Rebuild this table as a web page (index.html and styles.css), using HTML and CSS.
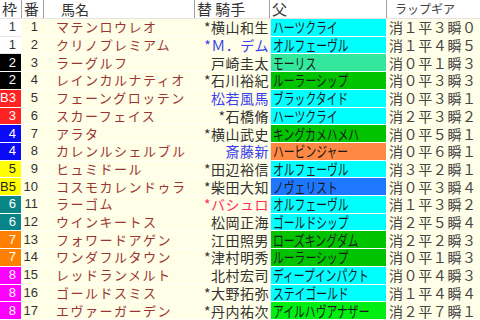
FILE: index.html
```html
<!DOCTYPE html>
<html lang="ja">
<head>
<meta charset="utf-8">
<link rel="stylesheet" href="styles.css">
</head>
<body>
<div class="table">
  <div class="row head">
    <div class="h h-waku">枠</div>
    <div class="h h-num">番</div>
    <div class="h h-name">馬名</div>
    <div class="h h-jockey">替&nbsp;騎手</div>
    <div class="h h-sire">父</div>
    <div class="h h-lap">ラップギア</div>
  </div>
  <div class="body">
    <div class="row"><div class="waku w1">1</div><div class="num">1</div><div class="name">マテンロウレオ</div><div class="jockey">*横山和生</div><div class="sire s-cyan"><span>ハーツクライ</span></div><div class="lap">消１平３瞬０</div></div>
    <div class="row"><div class="waku w1">1</div><div class="num">2</div><div class="name">クリノプレミアム</div><div class="jockey blue">*Ｍ．デム</div><div class="sire s-cyan"><span>オルフェーヴル</span></div><div class="lap">消１平４瞬５</div></div>
    <div class="row"><div class="waku w2">2</div><div class="num">3</div><div class="name">ラーグルフ</div><div class="jockey">戸崎圭太</div><div class="sire s-mint"><span>モーリス</span></div><div class="lap">消０平１瞬３</div></div>
    <div class="row"><div class="waku w2">2</div><div class="num">4</div><div class="name">レインカルナティオ</div><div class="jockey">*石川裕紀</div><div class="sire s-green"><span>ルーラーシップ</span></div><div class="lap">消０平３瞬３</div></div>
    <div class="row"><div class="waku w3">B3</div><div class="num">5</div><div class="name">フェーングロッテン</div><div class="jockey blue">松若風馬</div><div class="sire s-cyan"><span>ブラックタイド</span></div><div class="lap">消０平３瞬１</div></div>
    <div class="row"><div class="waku w3">3</div><div class="num">6</div><div class="name">スカーフェイス</div><div class="jockey">*石橋脩</div><div class="sire s-cyan"><span>ハーツクライ</span></div><div class="lap">消２平３瞬２</div></div>
    <div class="row"><div class="waku w4">4</div><div class="num">7</div><div class="name">アラタ</div><div class="jockey">*横山武史</div><div class="sire s-green"><span>キングカメハメハ</span></div><div class="lap">消０平５瞬１</div></div>
    <div class="row"><div class="waku w4">4</div><div class="num">8</div><div class="name">カレンルシェルブル</div><div class="jockey blue">斎藤新</div><div class="sire s-orange"><span>ハービンジャー</span></div><div class="lap">消０平６瞬１</div></div>
    <div class="row"><div class="waku w5">5</div><div class="num">9</div><div class="name">ヒュミドール</div><div class="jockey">*田辺裕信</div><div class="sire s-cyan"><span>オルフェーヴル</span></div><div class="lap">消３平２瞬１</div></div>
    <div class="row"><div class="waku w5">B5</div><div class="num">10</div><div class="name">コスモカレンドゥラ</div><div class="jockey">*柴田大知</div><div class="sire s-blue"><span>ノヴェリスト</span></div><div class="lap">消０平３瞬４</div></div>
    <div class="row"><div class="waku w6">6</div><div class="num">11</div><div class="name">ラーゴム</div><div class="jockey red">*バシュロ</div><div class="sire s-cyan"><span>オルフェーヴル</span></div><div class="lap">消１平３瞬２</div></div>
    <div class="row"><div class="waku w6">6</div><div class="num">12</div><div class="name">ウインキートス</div><div class="jockey">松岡正海</div><div class="sire s-cyan"><span>ゴールドシップ</span></div><div class="lap">消２平５瞬４</div></div>
    <div class="row"><div class="waku w7">7</div><div class="num">13</div><div class="name">フォワードアゲン</div><div class="jockey">江田照男</div><div class="sire s-green"><span>ローズキングダム</span></div><div class="lap">消２平２瞬３</div></div>
    <div class="row"><div class="waku w7">7</div><div class="num">14</div><div class="name">ワンダフルタウン</div><div class="jockey">*津村明秀</div><div class="sire s-green"><span>ルーラーシップ</span></div><div class="lap">消０平１瞬３</div></div>
    <div class="row"><div class="waku w8">8</div><div class="num">15</div><div class="name">レッドランメルト</div><div class="jockey">北村宏司</div><div class="sire s-cyan"><span>ディープインパクト</span></div><div class="lap">消０平４瞬３</div></div>
    <div class="row"><div class="waku w8">8</div><div class="num">16</div><div class="name">ゴールドスミス</div><div class="jockey">*大野拓弥</div><div class="sire s-cyan"><span>ステイゴールド</span></div><div class="lap">消１平４瞬４</div></div>
    <div class="row"><div class="waku w8">8</div><div class="num">17</div><div class="name">エヴァーガーデン</div><div class="jockey">*丹内祐次</div><div class="sire s-lime"><span>アイルハヴアナザー</span></div><div class="lap">消２平７瞬１</div></div>
  </div>
</div>
</body>
</html>
```

FILE: styles.css
```css
* { box-sizing: border-box; margin: 0; padding: 0; }

html, body {
  width: 480px;
  height: 320px;
  overflow: hidden;
  background: #fffee6;
}

body {
  font-family: "Noto Sans CJK JP", "Liberation Sans", sans-serif;
  color: #333;
}

.table {
  width: 480px;
  height: 320px;
  display: flex;
  flex-direction: column;
  overflow: hidden;
}

.row {
  display: grid;
  grid-template-columns: 22px 22px 151px 75px 117px 93px;
}

.head {
  height: 19px;
  background: #fff;
  border-bottom: 1px solid #e4e4e4;
}

.h {
  display: flex;
  align-items: center;
  font-size: 15px;
  line-height: 18px;
  color: #333;
  border-right: 1px solid #a0a0a0;
  white-space: nowrap;
}

.h-waku { padding-left: 2px; }
.h-num { padding-left: 2px; }
.h-name { padding-left: 17px; font-size: 14px; }
.h-jockey { padding-left: 2px; }
.h-sire { padding-left: 2px; }
.h-lap { border-right: none; padding-left: 8px; font-size: 12px; color: #444; }

.body {
  flex: 1;
  display: flex;
  flex-direction: column;
}

.body .row { flex: 1; }

.body .row > div {
  display: flex;
  align-items: center;
  white-space: nowrap;
  border-bottom: 1px solid #fffff6;
  line-height: 16px;
}

.waku {
  justify-content: flex-end;
  padding-right: 5px;
  font-family: "Liberation Sans", sans-serif;
  font-size: 13px;
  color: #fff;
  border-right: 1px solid #fff;
  border-bottom-color: #fff !important;
}
.w1 { background: #fff; color: #333; border-bottom-color: #e8e8e8 !important; }
.w2 { background: #000; }
.w3 { background: #ff2222; }
.w4 { background: #0a0af5; }
.w5 { background: #ffff00; color: #222; }
.w6 { background: #0a8585; }
.w7 { background: #ff8000; }
.w8 { background: #ff00ff; }

.num {
  justify-content: flex-end;
  padding-right: 6px;
  font-family: "Liberation Sans", sans-serif;
  font-size: 13px;
  color: #333;
}

.name {
  padding-left: 12px;
  font-size: 13px;
  letter-spacing: 1.5px;
  color: #9b3535;
  overflow: hidden;
}

.jockey {
  justify-content: flex-end;
  padding-right: 1px;
  font-size: 14px;
  letter-spacing: 0.5px;
  color: #333;
}
.jockey.blue { color: #3a3ef0; }
.jockey.red { color: #ff3060; }

.sire {
  padding-left: 2px;
  font-size: 15px;
  color: #1a1a1a;
  border-left: 1px solid #e8e8e8;
  border-right: 1px solid #fff;
  border-bottom-color: #fff !important;
  overflow: hidden;
}
.sire span {
  display: inline-block;
  transform: scaleX(0.72);
  transform-origin: left center;
}
.s-cyan { background: #00ffff; }
.s-mint { background: #33e89c; }
.s-green { background: #00c400; }
.s-lime { background: #00ee11; }
.s-orange { background: #ff8844; }
.s-blue { background: #1e78ff; }

.lap {
  padding-left: 2px;
  font-size: 14px;
  letter-spacing: 0.6px;
  color: #444;
  overflow: hidden;
}
```
